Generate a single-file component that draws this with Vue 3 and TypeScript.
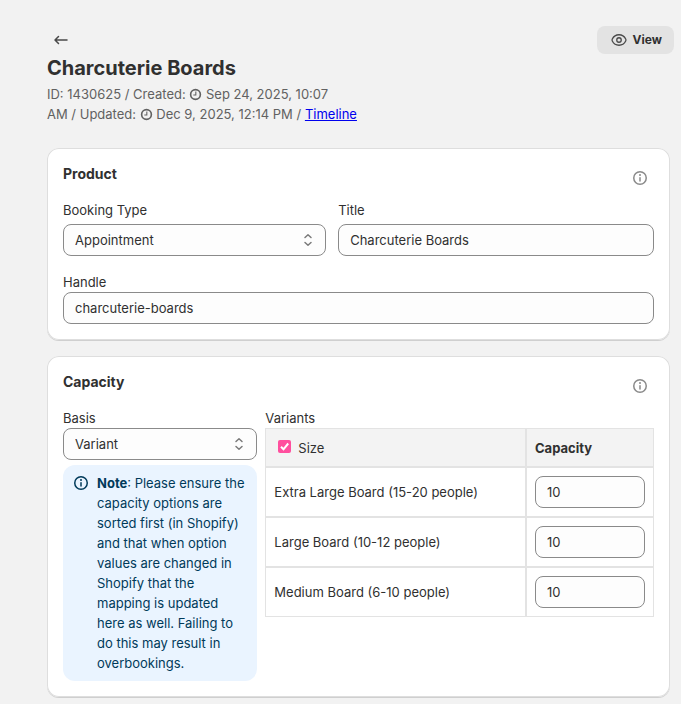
<script setup lang="ts">
import { ref } from 'vue'

interface Variant {
  id: string
  name: string
  capacity: string
}

const bookingType = ref('Appointment')
const title = ref('Charcuterie Boards')
const handle = ref('charcuterie-boards')
const basis = ref('Variant')
const sizeEnabled = ref(true)
const variants = ref<Variant[]>([
  { id: 'xl', name: 'Extra Large Board (15-20 people)', capacity: '10' },
  { id: 'lg', name: 'Large Board (10-12 people)', capacity: '10' },
  { id: 'md', name: 'Medium Board (6-10 people)', capacity: '10' },
])
</script>

<template>
  <main class="page">
    <header class="page-header">
      <div class="toolbar">
        <a class="back" href="#" aria-label="Back">
          <svg class="icon" viewBox="0 0 20 20" fill="none" stroke="currentColor" stroke-width="1.5" stroke-linecap="round" stroke-linejoin="round">
            <path d="M16 10H4.5M7.500 6.500l-3.500 3.500 3.500 3.500" />
          </svg>
        </a>
        <button class="view" type="button">
          <svg class="icon" viewBox="0 0 20 20" fill="none" stroke="currentColor" stroke-width="1.300">
            <path d="M10 4.75c-3.4 0-5.7 2.2-6.7 4.2a2.3 2.3 0 0 0 0 2.1c1 2 3.3 4.2 6.7 4.2s5.7-2.2 6.7-4.2a2.3 2.3 0 0 0 0-2.1c-1-2-3.300-4.200-6.700-4.200Z" />
            <circle cx="10" cy="10" r="2.25" />
          </svg>
          View
        </button>
      </div>
      <h1>Charcuterie Boards</h1>
      <p class="meta">
        ID: 1430625 / Created:
        <svg class="clock" viewBox="0 0 12 12" fill="none" stroke="currentColor"><circle cx="6" cy="6" r="4.500" stroke-width="1.500" /><path d="M6.300 3.300v3.200H4" stroke-width="1" /></svg>
        Sep 24, 2025, 10:07<br />
        AM / Updated:
        <svg class="clock" viewBox="0 0 12 12" fill="none" stroke="currentColor"><circle cx="6" cy="6" r="4.500" stroke-width="1.500" /><path d="M6.300 3.300v3.200H4" stroke-width="1" /></svg>
        Dec 9, 2025, 12:14 PM / <a href="#">Timeline</a>
      </p>
    </header>

    <section class="card">
      <div class="card-header">
        <h2>Product</h2>
        <button class="info" type="button" aria-label="About product">
          <svg class="icon" viewBox="0 0 20 20" fill="none" stroke="currentColor" stroke-width="1.5" stroke-linecap="round">
            <circle cx="10" cy="10" r="6.250" /><path d="M10 9.750v3.250" /><circle cx="10" cy="7" r="1" fill="currentColor" stroke="none" />
          </svg>
        </button>
      </div>
      <div class="product-grid">
        <div class="field spaced">
          <label for="booking-type">Booking Type</label>
          <div class="select">
            <select id="booking-type" v-model="bookingType">
              <option>Appointment</option>
            </select>
            <svg class="icon chevrons" viewBox="0 0 20 20" fill="none" stroke="currentColor" stroke-width="1.5" stroke-linecap="round" stroke-linejoin="round">
              <path d="M7 7.500 10 4.800l3 2.700M7 12.500l3 2.700 3-2.700" />
            </svg>
          </div>
        </div>
        <div class="field spaced">
          <label for="title">Title</label>
          <input id="title" v-model="title" class="text-input" type="text" />
        </div>
      </div>
      <div class="field">
        <label for="handle">Handle</label>
        <input id="handle" v-model="handle" class="text-input" type="text" />
      </div>
    </section>

    <section class="card">
      <div class="card-header">
        <h2>Capacity</h2>
        <button class="info" type="button" aria-label="About capacity">
          <svg class="icon" viewBox="0 0 20 20" fill="none" stroke="currentColor" stroke-width="1.5" stroke-linecap="round">
            <circle cx="10" cy="10" r="6.250" /><path d="M10 9.750v3.250" /><circle cx="10" cy="7" r="1" fill="currentColor" stroke="none" />
          </svg>
        </button>
      </div>
      <div class="capacity-grid">
        <div class="field">
          <label for="basis">Basis</label>
          <div class="select">
            <select id="basis" v-model="basis">
              <option>Variant</option>
            </select>
            <svg class="icon chevrons" viewBox="0 0 20 20" fill="none" stroke="currentColor" stroke-width="1.5" stroke-linecap="round" stroke-linejoin="round">
              <path d="M7 7.500 10 4.800l3 2.700M7 12.500l3 2.700 3-2.700" />
            </svg>
          </div>
          <div class="note">
            <svg class="icon" viewBox="0 0 20 20" fill="none" stroke="currentColor" stroke-width="1.5" stroke-linecap="round">
              <circle cx="10" cy="10" r="6.250" /><path d="M10 9.750v3.250" /><circle cx="10" cy="7" r="1" fill="currentColor" stroke="none" />
            </svg>
            <p>
              <strong>Note</strong>: Please ensure the capacity options are sorted first (in Shopify) and that when
              option values are changed in Shopify that the mapping is updated here as well. Failing to do this may
              result in overbookings.
            </p>
          </div>
        </div>
        <div class="field">
          <span id="variants-label">Variants</span>
          <table aria-labelledby="variants-label">
            <thead>
              <tr>
                <th scope="col">
                  <label class="check">
                    <input v-model="sizeEnabled" type="checkbox" />
                    <svg class="tick" viewBox="0 0 13 13" fill="none" stroke="currentColor" stroke-width="2">
                      <path d="m3 6.800 2.500 2.500L10.200 3.500" />
                    </svg>
                    <span>Size</span>
                  </label>
                </th>
                <th class="amount" scope="col">Capacity</th>
              </tr>
            </thead>
            <tbody>
              <tr v-for="variant in variants" :key="variant.id">
                <td>{{ variant.name }}</td>
                <td class="amount">
                  <input v-model="variant.capacity" class="text-input" type="text" inputmode="numeric" :aria-label="`Capacity for ${variant.name}`" />
                </td>
              </tr>
            </tbody>
          </table>
        </div>
      </div>
    </section>
  </main>
</template>

<style>
body {
  margin: 0;
  background: #f2f2f2;
}
</style>

<style scoped>
* {
  box-sizing: border-box;
}
.page {
  padding: 26px 11px 7px 47px;
  color: #303030;
  font: 400 13px/20px Inter, "Liberation Sans", sans-serif;
}
h1,
h2,
p {
  margin: 0;
}
.icon {
  display: block;
  flex: none;
  width: 20px;
  height: 20px;
}
.page-header {
  margin-bottom: 24px;
}
.toolbar {
  display: flex;
  align-items: center;
  justify-content: space-between;
  margin-right: -4px;
}
.back {
  padding: 4px;
  color: #4a4a4a;
}
.view {
  display: flex;
  align-items: center;
  gap: 4px;
  height: 28px;
  padding: 0 12px;
  border: 0;
  border-radius: 8px;
  background: #e3e3e3;
  color: #303030;
  font: 700 12px/20px Inter, "Liberation Sans", sans-serif;
}
.view .icon {
  color: #4a4a4a;
}
h1 {
  padding: 2px 0 4px;
  font-size: 20px;
  font-weight: 700;
  line-height: 24px;
}
.meta {
  color: #616161;
}
.meta a {
  color: #0000ee;
}
.clock {
  width: 13px;
  height: 13px;
  vertical-align: -2px;
}
.card {
  padding: 16px;
  border-radius: 12px;
  background: #fff;
  box-shadow: inset 0 0 0 1px #dedede, 0 1px 0 0 #cfcfcf;
}
.card + .card {
  margin-top: 16px;
}
.card-header {
  display: flex;
  align-items: flex-start;
  justify-content: space-between;
  margin-bottom: 8px;
}
h2 {
  font-size: 14px;
  font-weight: 650;
  line-height: 20px;
}
.info {
  padding: 4px;
  border: 0;
  background: none;
  color: #8a8a8a;
}
.product-grid {
  display: grid;
  grid-template-columns: 5fr 6fr;
  gap: 12px;
  margin-bottom: 16px;
}
.capacity-grid {
  display: grid;
  grid-template-columns: 1fr 2fr;
  gap: 8px;
}
.field {
  display: flex;
  flex-direction: column;
  min-width: 0;
}
.spaced {
  gap: 4px;
}
.select {
  position: relative;
}
select,
.text-input {
  display: block;
  width: 100%;
  height: 32px;
  margin: 0;
  padding: 0 11px;
  border: 1px solid #8a8a8a;
  border-radius: 8px;
  appearance: none;
  background: #fdfdfd;
  color: #303030;
  font: inherit;
}
.chevrons {
  position: absolute;
  top: 6px;
  right: 8px;
  color: #7a7a7a;
  pointer-events: none;
}
.note {
  display: flex;
  gap: 6px;
  margin-top: 5px;
  padding: 8px;
  border-radius: 12px;
  background: #eaf4ff;
  color: #003a5a;
}
.note strong {
  font-weight: 700;
}
table {
  width: 100%;
  border: 0;
  border-spacing: 0;
  table-layout: fixed;
}
th,
td {
  padding: 8px;
  border: 1px solid #e3e3e3;
  text-align: left;
}
th {
  height: 39px;
  background: #f3f3f3;
  font-weight: 650;
}
.amount {
  width: 128px;
}
.check {
  display: flex;
  align-items: center;
  gap: 7px;
  position: relative;
  padding-left: 4px;
  font-weight: 400;
}
.check input {
  width: 13px;
  height: 13px;
  margin: 0 0 3px;
  border-radius: 2px;
  appearance: none;
  background: #fff;
  box-shadow: inset 0 0 0 1px #8a8a8a;
}
.check input:checked {
  background: #ff4f9e;
  box-shadow: none;
}
.tick {
  position: absolute;
  top: 2px;
  left: 4px;
  width: 13px;
  height: 13px;
  color: #fff;
  pointer-events: none;
}
.check input:not(:checked) + .tick {
  display: none;
}
</style>
